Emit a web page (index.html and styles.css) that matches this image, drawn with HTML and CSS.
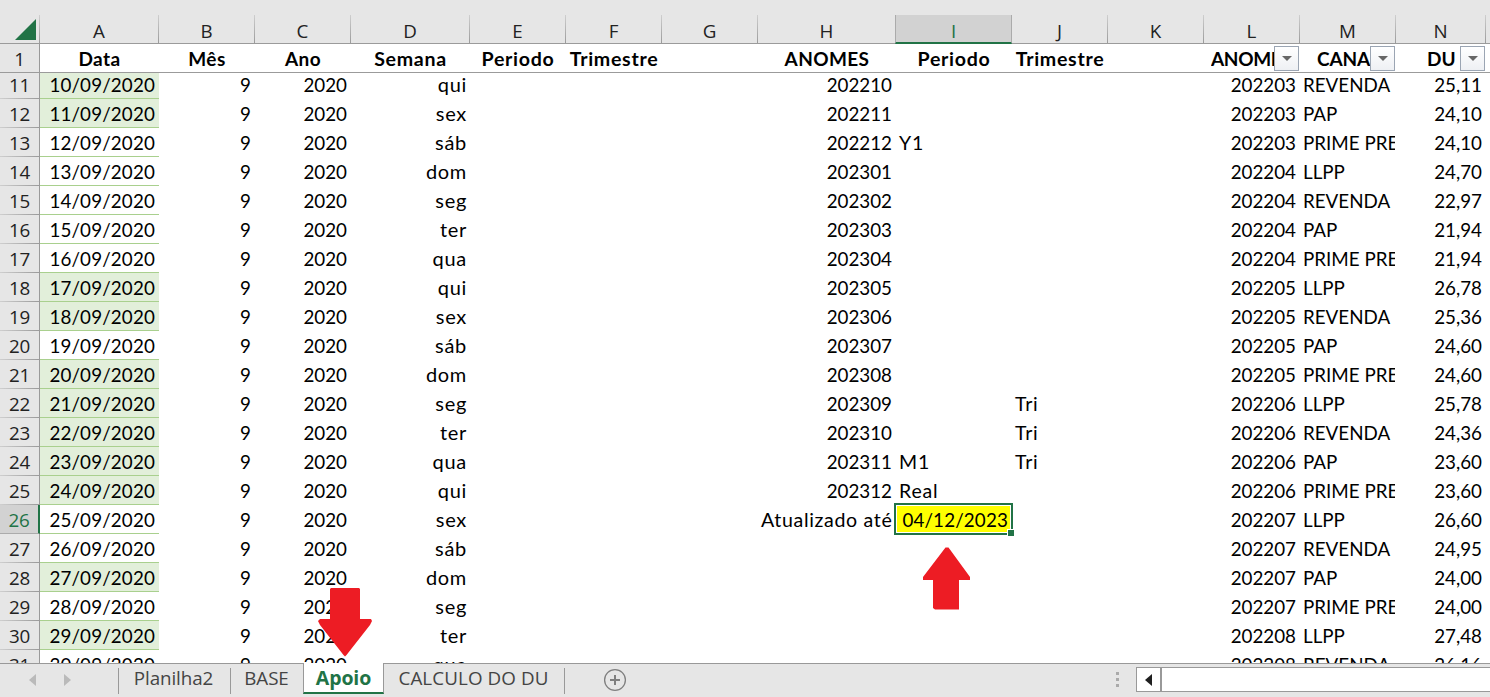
FILE: index.html
```html
<!DOCTYPE html>
<html lang="pt-BR">
<head>
<meta charset="utf-8">
<title>Apoio</title>
<link rel="stylesheet" href="styles.css">
</head>
<body>
<div class="app">
  <div class="row letters">
    <div class="corner"><svg width="21" height="21" viewBox="0 0 21 21"><path d="M21 0V21H0Z" fill="#217346"/></svg></div>
    <div>A</div><div>B</div><div>C</div><div>D</div><div>E</div><div>F</div><div>G</div><div>H</div><div class="active">I</div><div>J</div><div>K</div><div>L</div><div>M</div><div>N</div><div class="rest"></div>
  </div>
  <div class="row titles">
    <div class="num">1</div>
    <div>Data</div><div>Mês</div><div>Ano</div><div class="wide">Semana</div><div class="wide">Periodo</div><div class="wide">Trimestre</div><div></div><div>ANOMES</div><div class="wide">Periodo</div><div class="wide">Trimestre</div><div></div>
    <div class="filtered"><span class="anomes">ANOMES</span><i class="filter"></i></div><div class="filtered"><span class="canal">CANAL</span><i class="filter"></i></div><div class="filtered"><span class="du">DU</span><i class="filter"></i></div><div class="rest"></div>
  </div>
  <div class="body"><div class="rows" id="rows"></div></div>
  <div class="tabs">
    <div class="nav">
      <svg width="7" height="12" viewBox="0 0 7 12"><path d="M7 0V12L0 6Z" fill="#bababa"/></svg>
      <svg width="7" height="12" viewBox="0 0 7 12"><path d="M0 0V12L7 6Z" fill="#bababa"/></svg>
    </div>
    <div class="tab t1"><span>Planilha2</span></div>
    <div class="tab t2"><span>BASE</span></div>
    <div class="tab on"><span>Apoio</span></div>
    <div class="tab t4"><span>CALCULO DO DU</span></div>
    <div class="add"><svg width="24" height="24" viewBox="0 0 24 24" fill="none" stroke="#7f7f7f"><circle cx="12" cy="12" r="10.4" stroke-width="1.3"/><path d="M12 7V17M7 12H17" stroke-width="2"/></svg></div>
    <div class="grip"><i></i><i></i><i></i></div>
    <div class="scroll"><div class="back"><svg width="7" height="12" viewBox="0 0 7 12"><path d="M7 0V12L0 6Z" fill="#1f1f1f"/></svg></div></div>
  </div>
  <svg class="arrow up" width="48" height="63" viewBox="0 0 48 63"><path d="M22.5 .5H25.5L47 30V33H36V62.500H12L10 61V33H0V30Z" fill="#ed1c24"/></svg>
  <svg class="arrow down" width="54" height="69" viewBox="0 0 54 69"><path d="M13 0H41L42 1V31H53L54 33L52 37L28.500 67L27 68.500L25.500 67L2 37L0 33L2 31H12V1Z" fill="#ed1c24"/></svg>
</div>
<script src="sheet.js"></script>
</body>
</html>
```
FILE: sheet.js
```js
const days = ['qui', 'sex', 'sáb', 'dom', 'seg', 'ter', 'qua'];
const highlighted = [11, 12, 18, 19, 21, 22, 23, 24, 25, 28, 30];
const months = ['202210', '202211', '202212', '202301', '202302', '202303', '202304', '202305', '202306', '202307', '202308', '202309', '202310', '202311', '202312', 'Atualizado até'];
const periods = { 13: 'Y1', 24: 'M1', 25: 'Real', 26: '04/12/2023' };
const quarters = { 22: 'Tri', 23: 'Tri', 24: 'Tri' };
const channels = ['REVENDA', 'PAP', 'PRIME PRE', 'LLPP'];
const du = ['25,11', '24,10', '24,10', '24,70', '22,97', '21,94', '21,94', '26,78', '25,36', '24,60', '24,60', '25,78', '24,36', '23,60', '23,60', '26,60', '24,95', '24,00', '24,00', '27,48', '26,16'];

const cell = (text, cls) => `<div class="${cls || ''}"><span>${text || ''}</span></div>`;
let html = '';
for (let i = 0; i < 21; i++) {
  const n = 11 + i;
  html += `<div class="row${n === 26 ? ' current' : ''}"><div class="num">${n}</div>`
    + cell(`${10 + i}/09/2020`, 'date' + (highlighted.includes(n) ? ' hl' : ''))
    + cell('9') + cell('2020') + cell(days[i % 7], 'day')
    + cell() + cell() + cell()
    + cell(months[i], n === 26 ? 'note' : '')
    + cell(periods[n], n === 26 ? 'selected' : 'left word')
    + cell(quarters[n], 'left word') + cell()
    + cell(String(202203 + Math.floor((i + 1) / 4))) + cell(channels[i % 4], 'left channel') + cell(du[i], 'value')
    + '</div>';
}
document.getElementById('rows').innerHTML = html;
```
FILE: styles.css
```css
* { box-sizing: border-box; }
body { margin: 0; overflow: hidden; background: #fff; }
.app { position: relative; width: 1490px; height: 697px; display: flex; flex-direction: column; overflow: hidden; font: 18.8px/29px Lato, Carlito, sans-serif; color: #000; }
.row { display: grid; grid-template-columns: 40px 119px 96px 96px 119px 96px 96px 96px 138px 116px 96px 96px 96px 96px 90px 4px; grid-template-rows: 29px; height: 29px; white-space: nowrap; }
.row > div { min-width: 0; min-height: 0; }

.letters { height: 44px; flex: none; padding-top: 15px; background: #e6e6e6; border-bottom: 1px solid #9b9b9b; font: 18.8px/32px "Open Sans", sans-serif; color: #222; text-align: center; }
.letters > div { height: 28px; border-right: 1px solid; border-image: linear-gradient(#d0d0d0, #999) 1; }
.letters > .rest { border: 0; }
.letters > .active { height: 29px; margin-left: -1px; background: #d2d2d2; border: 1px solid #ababab; border-width: 0 1px 2px; border-image: none; border-bottom-color: #217346; color: #217346; }
.letters > .corner { display: flex; justify-content: flex-end; padding: 4px 3px 0 0; }

.titles { flex: none; grid-template-rows: 28px; border-bottom: 1px solid #9b9b9b; font-weight: 700; font-size: 19px; line-height: 29px; text-align: center; letter-spacing: .4px; }
.titles .wide { font-size: 19.6px; letter-spacing: .7px; }
.num { background: #e6e6e6; border-right: 1px solid #999; font: 18.8px/30px "Open Sans", sans-serif; color: #222; text-align: center; letter-spacing: -.2px; }
.rows .num { border-bottom: 1px solid; border-image: linear-gradient(90deg, #d0d0d0, #999) 1; }
.filtered { display: flex; justify-content: flex-end; overflow: hidden; letter-spacing: .1px; }
.filtered span { overflow: hidden; text-align: left; }
.anomes { width: 63px; letter-spacing: -.35px; }
.canal { width: 53px; letter-spacing: -.1px; }
.filtered .du { width: 33px; }
.filter { flex: none; width: 25px; height: 25px; margin: 2px 1px 0 0; border: 1px solid #9ba5b3; background: linear-gradient(#fff, #eef0f4); display: flex; align-items: center; justify-content: center; }
.filter::after { content: ""; border: 5px solid transparent; border-top-color: #666; border-bottom: 0; }

.body { flex: none; height: 590px; overflow: hidden; }
.rows { margin-top: -3px; text-align: right; line-height: 29px; }
.rows .row > div:where(:not(.num)) { padding: 0 4px 0 3px; overflow: hidden; }
.rows .date { border-bottom: 1px solid #a9d08e; letter-spacing: .15px; }
.rows .hl { background: #e2efda; }
.rows .left { text-align: left; }
.rows .day { font-size: 20px; letter-spacing: .7px; }
.rows .row > div.day { padding-right: 3px; }
.rows .note { font-size: 19.6px; letter-spacing: .65px; }
.rows .word { font-size: 19.5px; letter-spacing: .8px; }
.rows .row > div.channel { padding-right: 0; width: 95px; }
.rows .current .num { background: #d2d2d2; color: #217346; border-right: 2px solid #217346; border-image: none; border-bottom-color: #ababab; }
.rows .row > div.selected { position: relative; overflow: visible; margin: -2px -1px -1px -2px; padding-right: 3px; border: 2px solid #217346; background: #ff0; box-shadow: inset 0 0 0 1px #fff; z-index: 1; letter-spacing: .15px; }
.selected::after { content: ""; position: absolute; right: -3px; bottom: -3px; width: 6px; height: 6px; background: #217346; box-shadow: 0 0 0 1px #fff; }

.tabs { flex: 1; display: flex; background: #e6e6e6; border-top: 1px solid #999; font: 18.8px/30px "Open Sans", sans-serif; color: #444; white-space: nowrap; }
.nav { width: 118px; padding: 10px 0 0 29px; display: flex; gap: 28px; }
.tab { flex: none; height: 26px; margin-top: 4px; line-height: 20px; border-left: 1px solid #999; text-align: center; letter-spacing: -.1px; }
.t1 { width: 112px; padding-right: 2px; }
.t2 { width: 73px; padding-right: 1px; }
.tab.on { width: 81px; height: 31px; margin-top: -1px; line-height: 30px; background: #fff; border: 1px solid #999; border-width: 0 1px 2px; border-bottom-color: #217346; color: #217346; font-weight: 700; font-size: 19.5px; }
.t4 { width: 181px; padding-right: 1px; border-left: 0; border-right: 1px solid #999; letter-spacing: .1px; }
.add { width: 551px; padding: 4px 0 0 38px; }
.grip { width: 20px; padding-top: 8px; display: flex; flex-direction: column; gap: 3px; }
.grip i { width: 3px; height: 3px; background: #aaa; }
.scroll { flex: 1; height: 25px; margin-top: 3px; border: 1px solid #999; border-right: 0; background: #fff; }
.back { width: 25px; height: 23px; border-right: 2px solid #999; display: flex; align-items: center; justify-content: center; }

.arrow { position: absolute; }
.up { left: 923px; top: 547px; }
.down { left: 318px; top: 588px; }
```
